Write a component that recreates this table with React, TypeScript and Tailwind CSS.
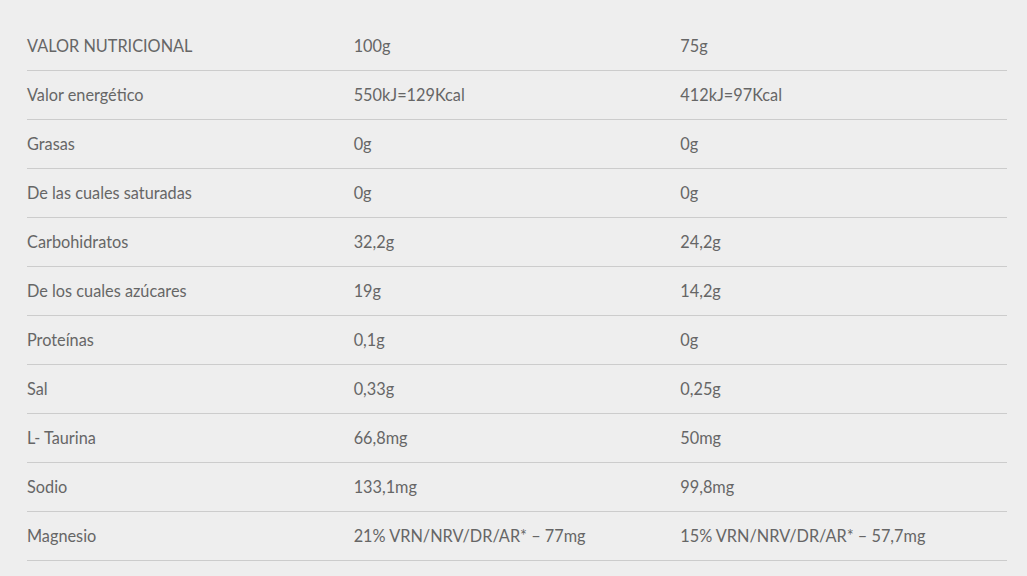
import React from "react";

const rows: [string, string, string][] = [
  ["VALOR NUTRICIONAL", "100g", "75g"],
  ["Valor energético", "550kJ=129Kcal", "412kJ=97Kcal"],
  ["Grasas", "0g", "0g"],
  ["De las cuales saturadas", "0g", "0g"],
  ["Carbohidratos", "32,2g", "24,2g"],
  ["De los cuales azúcares", "19g", "14,2g"],
  ["Proteínas", "0,1g", "0g"],
  ["Sal", "0,33g", "0,25g"],
  ["L- Taurina", "66,8mg", "50mg"],
  ["Sodio", "133,1mg", "99,8mg"],
  ["Magnesio", "21% VRN/NRV/DR/AR* – 77mg", "15% VRN/NRV/DR/AR* – 57,7mg"],
];

const App: React.FC = () => {
  return (
    <div
      className="min-h-screen bg-[#eeeeee] px-[27px] pt-[22px] text-[16.3px] text-[#666666]"
      style={{ fontFamily: "Lato, 'Open Sans', sans-serif" }}
    >
      {/* Nutrition table */}
      <div className="w-[980px]">
        {rows.map((row) => (
          <div
            key={row[0]}
            className="grid grid-cols-3 h-[49px] items-center border-b border-[#cccccc]"
          >
            {row.map((cell, i) => (
              <div key={i}>{cell}</div>
            ))}
          </div>
        ))}
      </div>
    </div>
  );
};

export default App;
